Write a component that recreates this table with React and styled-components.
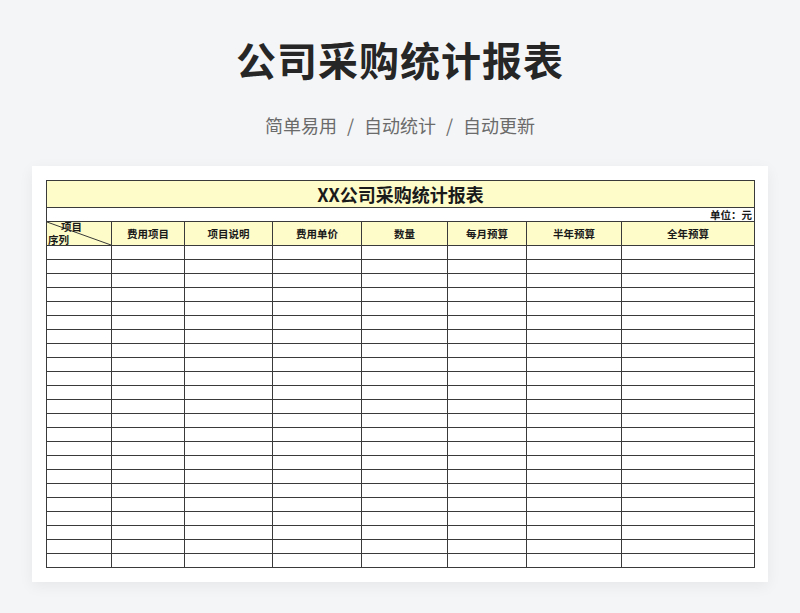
import React from "react";
import styled, { createGlobalStyle } from "styled-components";

const GlobalStyle = createGlobalStyle`
  body {
    margin: 0;
    background: #f4f5f7;
    font-family: "Noto Sans CJK SC", "Noto Sans", sans-serif;
  }
`;

const columns = [
  { label: "", width: 65 },
  { label: "费用项目", width: 73 },
  { label: "项目说明", width: 88 },
  { label: "费用单价", width: 89 },
  { label: "数量", width: 86 },
  { label: "每月预算", width: 79 },
  { label: "半年预算", width: 95 },
  { label: "全年预算", width: 133 },
];

const ROW_COUNT = 23;

const App = () => {
  const rows = Array.from({ length: ROW_COUNT }, (_, i) => i);

  return (
    <Page>
      <GlobalStyle />
      <Heading>公司采购统计报表</Heading>
      <Tagline>
        <span>简单易用</span>
        <Sep>/</Sep>
        <span>自动统计</span>
        <Sep>/</Sep>
        <span>自动更新</span>
      </Tagline>
      <Card>
        <Sheet>
          <colgroup>
            {columns.map((c, i) => (
              <col key={i} style={{ width: c.width }} />
            ))}
          </colgroup>
          <tbody>
            <tr>
              <TitleCell colSpan={columns.length}>XX公司采购统计报表</TitleCell>
            </tr>
            <tr>
              <UnitCell colSpan={columns.length}>单位：元</UnitCell>
            </tr>
            <tr>
              <CornerCell>
                <svg width="100%" height="100%" viewBox="0 0 64 24" preserveAspectRatio="none">
                  <line x1="0" y1="0" x2="64" y2="24" stroke="#333" strokeWidth="1" />
                </svg>
                <CornerTop>项目</CornerTop>
                <CornerBottom>序列</CornerBottom>
              </CornerCell>
              {columns.slice(1).map((c) => (
                <HeadCell key={c.label}>{c.label}</HeadCell>
              ))}
            </tr>
            {rows.map((r) => (
              <tr key={r}>
                {columns.map((c, i) => (
                  <DataCell key={i} />
                ))}
              </tr>
            ))}
          </tbody>
        </Sheet>
      </Card>
    </Page>
  );
};

const Page = styled.div`
  padding-top: 35px;
  padding-bottom: 32px;
  display: flex;
  flex-direction: column;
  align-items: center;
`;

const Heading = styled.h1`
  margin: 0;
  font-size: 40px;
  line-height: 48px;
  font-weight: 700;
  color: #262626;
  letter-spacing: 1px;
`;

const Tagline = styled.div`
  margin-top: 30px;
  font-size: 18px;
  line-height: 24px;
  color: #6b6b6b;
  display: flex;
  align-items: center;
`;

const Sep = styled.span`
  margin: 0 10px;
`;

const Card = styled.div`
  margin-top: 29px;
  width: 736px;
  box-sizing: border-box;
  padding: 14px;
  background: #ffffff;
  box-shadow: 0 4px 14px rgba(0, 0, 0, 0.06);
`;

const Sheet = styled.table`
  width: 708px;
  table-layout: fixed;
  border-collapse: collapse;
  font-family: "Noto Sans CJK SC", sans-serif;
  color: #1a1a1a;

  td {
    border: 1px solid #3a3a3a;
    padding: 0;
    box-sizing: border-box;
  }
`;

const TitleCell = styled.td`
  height: 27px;
  background: #fefdca;
  text-align: center;
  font-size: 18px;
  font-weight: 700;
  line-height: 26px;
`;

const UnitCell = styled.td`
  height: 14px;
  text-align: right;
  font-size: 10.5px;
  font-weight: 700;
  line-height: 12px;
  padding-right: 2px !important;
`;

const HeadCell = styled.td`
  height: 24px;
  background: #fefdca;
  text-align: center;
  font-size: 10.5px;
  font-weight: 700;
  line-height: 22px;
`;

const CornerCell = styled.td`
  position: relative;
  height: 24px;
  background: #fefdca;
  font-size: 10.5px;
  font-weight: 700;
  line-height: 11px;

  svg {
    position: absolute;
    inset: 0;
    display: block;
  }
`;

const CornerTop = styled.span`
  position: absolute;
  top: -1px;
  right: 29px;
`;

const CornerBottom = styled.span`
  position: absolute;
  bottom: 0;
  left: 1px;
`;

const DataCell = styled.td`
  height: 14px;
`;

export default App;
